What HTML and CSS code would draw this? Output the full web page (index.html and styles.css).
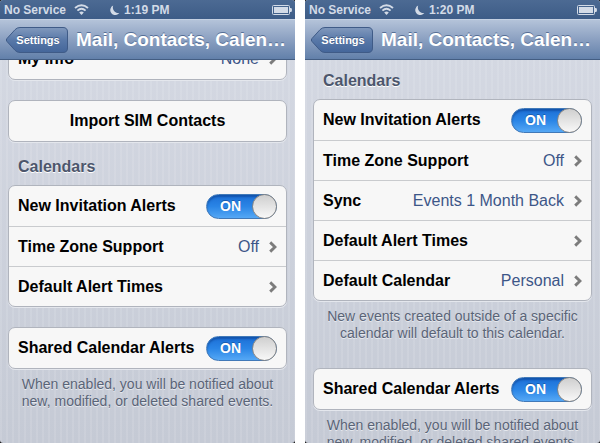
FILE: index.html
```
<!DOCTYPE html>
<html lang="en">
<head>
  <meta charset="UTF-8">
  <meta name="viewport" content="width=device-width, initial-scale=1.0">
  <title>Mail, Contacts, Calendars</title>
  <link rel="stylesheet" href="styles.css">
</head>
<body>
  <!-- shared shapes -->
  <svg class="defs" width="0" height="0" aria-hidden="true">
    <defs>
      <linearGradient id="backFill" x1="0" y1="0" x2="0" y2="1">
        <stop offset="0" stop-color="#8199bd"/>
        <stop offset="0.5" stop-color="#5878a8"/>
        <stop offset="1" stop-color="#44669a"/>
      </linearGradient>
      <symbol id="wifi" viewBox="0 0 15 11">
        <path d="M1 4 Q7.500 -1.500 14 4 M3.400 6.600 Q7.500 3 11.600 6.600" fill="none" stroke="#d3dbe7" stroke-width="1.900"/>
        <path d="M5.200 8.400 Q7.500 6.400 9.800 8.400 L7.500 11 Z" fill="#d3dbe7"/>
      </symbol>
      <symbol id="moon" viewBox="0 0 10 10">
        <path d="M3.200 0.500 A5 5 0 1 0 9.300 8 A5.600 5.600 0 0 1 3.200 0.500 Z" fill="#d3dbe7"/>
      </symbol>
      <symbol id="battery" viewBox="0 0 20 10">
        <rect x="0.500" y="0.500" width="17" height="9" rx="1" fill="none" stroke="#d3dbe7"/>
        <rect x="2" y="2" width="14" height="6" fill="#d3dbe7"/>
        <path d="M18 3 H19 Q20 3 20 5 Q20 7 19 7 H18 Z" fill="#d3dbe7"/>
      </symbol>
      <symbol id="back" viewBox="0 0 64 28">
        <path d="M15 1.500 H58 Q62.500 1.500 62.500 6 V22 Q62.500 26.500 58 26.500 H15 Q12 26.500 10 24.300 L2 15.500 Q0.500 14 2 12.500 L10 3.700 Q12 1.500 15 1.500 Z" fill="url(#backFill)" stroke="#3f5b87"/>
      </symbol>
      <symbol id="chevron" viewBox="0 0 8 12">
        <path d="M1.200 1.400 L6 6 L1.200 10.600" fill="none" stroke="#7c7c7c" stroke-width="2.900"/>
      </symbol>
    </defs>
  </svg>

  <main class="screens">
    <section class="phone">
      <div class="screen">
        <div class="status">
          <span class="carrier">No Service <svg class="wifi"><use href="#wifi"/></svg></span>
          <span class="time"><svg class="moon"><use href="#moon"/></svg> 1:19 PM</span>
          <svg class="battery"><use href="#battery"/></svg>
        </div>
        <header class="navbar">
          <button class="back" type="button"><svg><use href="#back"/></svg><span>Settings</span></button>
          <h1>Mail, Contacts, Calen…</h1>
        </header>
        <div class="content scrolled">
          <div class="group">
            <a class="row" href="#"><span class="label">My Info</span><span class="value">None</span><svg class="chevron"><use href="#chevron"/></svg></a>
          </div>
          <div class="group">
            <button class="row action" type="button">Import SIM Contacts</button>
          </div>
          <h2>Calendars</h2>
          <div class="group">
            <div class="row">
              <label class="label" for="invites1">New Invitation Alerts</label>
              <span class="switch"><input type="checkbox" id="invites1" checked><span>ON</span></span>
            </div>
            <a class="row" href="#"><span class="label">Time Zone Support</span><span class="value">Off</span><svg class="chevron"><use href="#chevron"/></svg></a>
            <a class="row" href="#"><span class="label">Default Alert Times</span><svg class="chevron"><use href="#chevron"/></svg></a>
          </div>
          <div class="group">
            <div class="row">
              <label class="label" for="shared1">Shared Calendar Alerts</label>
              <span class="switch"><input type="checkbox" id="shared1" checked><span>ON</span></span>
            </div>
          </div>
          <p>When enabled, you will be notified about<br>new, modified, or deleted shared events.</p>
        </div>
      </div>
    </section>

    <section class="phone">
      <div class="screen">
        <div class="status">
          <span class="carrier">No Service <svg class="wifi"><use href="#wifi"/></svg></span>
          <span class="time"><svg class="moon"><use href="#moon"/></svg> 1:20 PM</span>
          <svg class="battery"><use href="#battery"/></svg>
        </div>
        <header class="navbar">
          <button class="back" type="button"><svg><use href="#back"/></svg><span>Settings</span></button>
          <h1>Mail, Contacts, Calen…</h1>
        </header>
        <div class="content">
          <h2>Calendars</h2>
          <div class="group">
            <div class="row">
              <label class="label" for="invites2">New Invitation Alerts</label>
              <span class="switch"><input type="checkbox" id="invites2" checked><span>ON</span></span>
            </div>
            <a class="row" href="#"><span class="label">Time Zone Support</span><span class="value">Off</span><svg class="chevron"><use href="#chevron"/></svg></a>
            <a class="row" href="#"><span class="label">Sync</span><span class="value">Events 1 Month Back</span><svg class="chevron"><use href="#chevron"/></svg></a>
            <a class="row" href="#"><span class="label">Default Alert Times</span><svg class="chevron"><use href="#chevron"/></svg></a>
            <a class="row" href="#"><span class="label">Default Calendar</span><span class="value">Personal</span><svg class="chevron"><use href="#chevron"/></svg></a>
          </div>
          <p>New events created outside of a specific<br>calendar will default to this calendar.</p>
          <div class="group">
            <div class="row">
              <label class="label" for="shared2">Shared Calendar Alerts</label>
              <span class="switch"><input type="checkbox" id="shared2" checked><span>ON</span></span>
            </div>
          </div>
          <p>When enabled, you will be notified about<br>new, modified, or deleted shared events.</p>
        </div>
      </div>
    </section>
  </main>
</body>
</html>
```
FILE: styles.css
```
*, *::before {
  box-sizing: border-box;
}
body {
  margin: 0;
  background: #fff;
  font-family: "Liberation Sans", Arial, sans-serif;
  font-size: 16px;
}
.defs {
  position: absolute;
}
.screens {
  display: grid;
  grid-template-columns: 1fr 1fr;
  gap: 10px;
  height: 100vh;
}
.phone {
  min-width: 0;
  min-height: 0;
  background: #111;
}
.screen {
  display: flex;
  flex-direction: column;
  height: 100%;
  overflow: hidden;
  border-radius: 3px;
  background:
    repeating-linear-gradient(90deg, rgba(255, 255, 255, 0.1) 0 2px, transparent 2px 6px),
    linear-gradient(#d6dae4, #c5cad5);
}

/* status bar */
.status {
  display: grid;
  grid-template-columns: auto auto 1fr;
  align-items: center;
  gap: 21px;
  flex: none;
  height: 19px;
  padding: 0 3px 0 4px;
  background: linear-gradient(#4c6a93, #3d5c87);
  color: #d3dbe7;
  font-size: 12px;
  font-weight: bold;
  white-space: nowrap;
}
.carrier, .time {
  display: flex;
  align-items: center;
}
.carrier {
  gap: 8px;
}
.time {
  gap: 4px;
}
.wifi {
  width: 15px;
  height: 11px;
}
.moon {
  width: 10px;
  height: 10px;
}
.battery {
  width: 20px;
  height: 10px;
  justify-self: end;
}

/* navigation bar */
.navbar {
  display: flex;
  align-items: center;
  gap: 7px;
  flex: none;
  z-index: 1;
  height: 41px;
  padding: 0 5px;
  border-top: 1px solid #c4d0e2;
  border-bottom: 1px solid #435d82;
  background: linear-gradient(#b4c3d9, #8ba0c1 50%, #6280aa);
}
.back {
  display: grid;
  align-items: center;
  flex: none;
  padding: 0;
  border: none;
  background: none;
  color: #fff;
  font: bold 11px "Liberation Sans", Arial, sans-serif;
  text-shadow: 0 -1px 0 #3a5580;
  cursor: pointer;
}
.back svg, .back span {
  grid-area: 1 / 1;
}
.back svg {
  width: 64px;
  height: 28px;
}
.back span {
  padding-left: 2px;
}
h1 {
  margin: 0;
  color: #fff;
  font-size: 19px;
  line-height: 24px;
  text-shadow: 0 -1px 0 #566f96;
  white-space: nowrap;
}

/* grouped lists */
.content {
  padding: 11px 8px 0;
}
.scrolled {
  margin-top: -22px;
  padding-top: 0;
}
h2 {
  margin: 0 0 8px;
  padding-left: 10px;
  color: #4c566c;
  font-size: 16px;
  line-height: 20px;
  text-shadow: 0 1px 0 #fff;
}
.group {
  margin-bottom: 20px;
  border: 1px solid #b0b4bd;
  border-radius: 7px;
  background: #f7f7f7;
  box-shadow: 0 1px 0 #e4e7ed;
}
.group + h2 {
  margin-top: -5px;
}
.row {
  display: flex;
  align-items: center;
  gap: 10px;
  width: 100%;
  height: 40px;
  padding: 0 9px;
  color: #000;
  text-decoration: none;
  white-space: nowrap;
}
.row + .row {
  border-top: 1px solid #c9cbce;
}
.label {
  flex: 1;
  font-weight: bold;
}
.value {
  color: #3d5688;
}
.chevron {
  width: 8px;
  height: 12px;
}
.action {
  justify-content: center;
  border: none;
  background: none;
  font: bold 16px "Liberation Sans", Arial, sans-serif;
  cursor: pointer;
}
p {
  margin: -13px 0 26px;
  color: #5a6477;
  font-size: 14px;
  line-height: 17px;
  text-align: center;
  text-shadow: 0 1px 0 #e6e9ef;
  white-space: nowrap;
}

/* on/off switch */
.switch {
  display: grid;
  align-items: center;
}
.switch input, .switch span {
  grid-area: 1 / 1;
}
.switch input {
  appearance: none;
  display: flex;
  justify-content: flex-end;
  width: 71px;
  height: 25px;
  margin: 0;
  border: 1px solid #4179b8;
  border-radius: 13px;
  background: linear-gradient(#1c6fd6, #2a85e6 50%, #55a8f5);
  box-shadow: inset 0 2px 2px rgba(0, 40, 110, 0.4);
  cursor: pointer;
}
.switch input::before {
  content: "";
  width: 25px;
  height: 25px;
  margin: -1px;
  border: 1px solid #858585;
  border-radius: 50%;
  background: linear-gradient(#cfcfcf, #f8f8f8);
}
.switch span {
  padding-left: 14px;
  color: #fff;
  font-size: 14px;
  font-weight: bold;
  text-shadow: 0 -1px 0 #1a5cae;
  pointer-events: none;
}
```
